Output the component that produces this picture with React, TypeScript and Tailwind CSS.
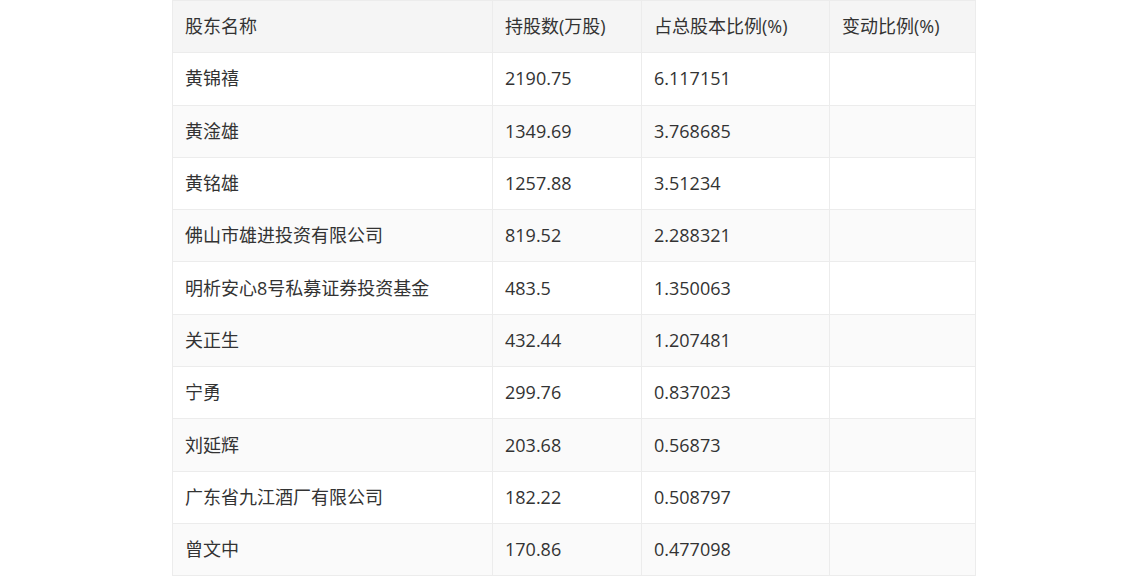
import React from 'react';

const rows: [string, string, string, string][] = [
  ['黄锦禧', '2190.75', '6.117151', ''],
  ['黄淦雄', '1349.69', '3.768685', ''],
  ['黄铭雄', '1257.88', '3.51234', ''],
  ['佛山市雄进投资有限公司', '819.52', '2.288321', ''],
  ['明析安心8号私募证券投资基金', '483.5', '1.350063', ''],
  ['关正生', '432.44', '1.207481', ''],
  ['宁勇', '299.76', '0.837023', ''],
  ['刘延辉', '203.68', '0.56873', ''],
  ['广东省九江酒厂有限公司', '182.22', '0.508797', ''],
  ['曾文中', '170.86', '0.477098', ''],
];

const headers = ['股东名称', '持股数(万股)', '占总股本比例(%)', '变动比例(%)'];
const widths = ['w-[320px]', 'w-[149px]', 'w-[188px]', 'w-[146px]'];

function App() {
  return (
    <div
      className="w-[1148px] h-[576px] bg-white flex justify-center overflow-hidden"
      style={{ fontFamily: '"Open Sans", "Noto Sans CJK SC", sans-serif' }}
    >
      <table className="table-fixed border-collapse text-[18px] text-[#333] self-start">
        <thead>
          <tr className="bg-[#f5f5f5] h-[52.3px]">
            {headers.map((h, i) => (
              <th key={h} className={`${widths[i]} border border-[#ececec] px-3 text-left font-normal`}>
                {h}
              </th>
            ))}
          </tr>
        </thead>
        <tbody>
          {rows.map((r, ri) => (
            <tr key={r[0]} className={`h-[52.3px] ${ri % 2 === 1 ? 'bg-[#fafafa]' : 'bg-white'}`}>
              {r.map((c, ci) => (
                <td key={ci} className={`${widths[ci]} border border-[#ececec] px-3`}>
                  {c}
                </td>
              ))}
            </tr>
          ))}
        </tbody>
      </table>
    </div>
  );
}

export default App;
